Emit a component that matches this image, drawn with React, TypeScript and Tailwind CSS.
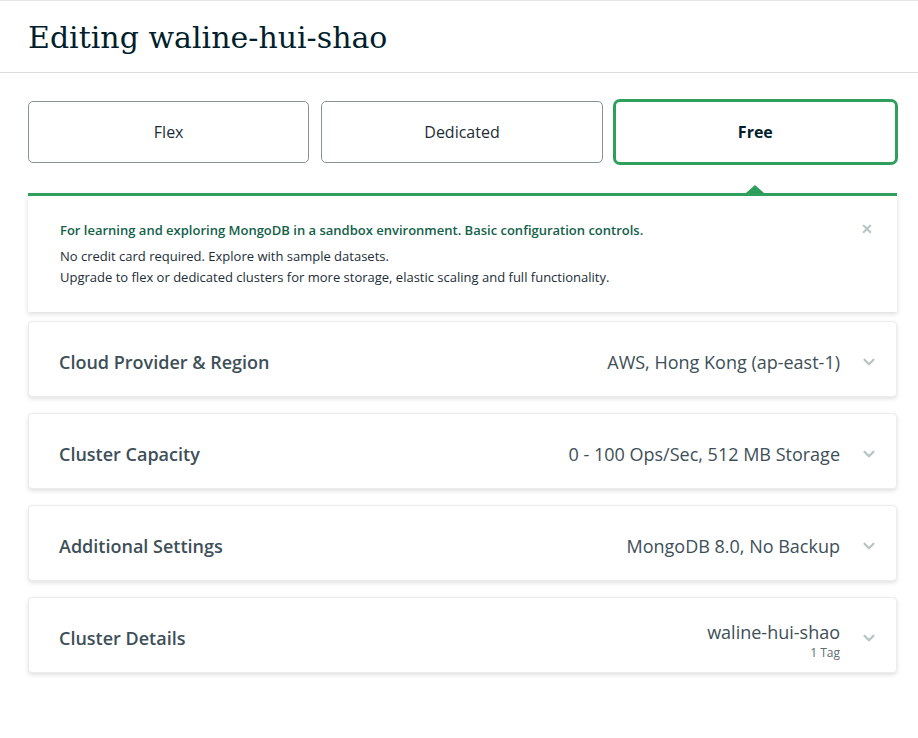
import { ChevronDown } from 'lucide-react';

const tiers = ['Flex', 'Dedicated', 'Free'];

const sections: { title: string; value: string; sub?: string }[] = [
  { title: 'Cloud Provider & Region', value: 'AWS, Hong Kong (ap-east-1)' },
  { title: 'Cluster Capacity', value: '0 - 100 Ops/Sec, 512 MB Storage' },
  { title: 'Additional Settings', value: 'MongoDB 8.0, No Backup' },
  { title: 'Cluster Details', value: 'waline-hui-shao', sub: '1 Tag' },
];

function Section({ title, value, sub }: { title: string; value: string; sub?: string }) {
  return (
    <div className="flex h-[76px] items-center justify-between rounded border border-[#ececec] bg-white pl-[30px] pr-[18px] pt-[6px] shadow-[0_2px_4px_rgba(0,0,0,0.12)]">
      <div className="text-[18px] font-semibold leading-[24px] text-[#3d4f58]">{title}</div>
      <div className="flex items-center gap-[20px]">
        <div className={`flex flex-col items-end ${sub ? 'pt-[4px]' : ''}`}>
          <div className="text-[18px] leading-[24px] text-[#3d4f58]">{value}</div>
          {sub && <div className="mt-[2px] text-[12px] leading-[14px] text-[#5c6c75]">{sub}</div>}
        </div>
        <ChevronDown size={18} strokeWidth={3} className="text-[#b8c4c2]" />
      </div>
    </div>
  );
}

export default function App() {
  return (
    <div className="min-h-screen border-t border-[#e8e8e8] bg-white font-['Open_Sans',sans-serif] text-[#001e2b]">
      <header className="flex h-[72px] items-center border-b border-[#dcdcdc] px-[28px]">
        <h1 className="mt-[2px] font-['DejaVu_Serif',serif] text-[30px] leading-[36px] text-[#001e2b]">Editing waline-hui-shao</h1>
      </header>

      <main className="pl-[28px] pr-[21px] pt-[28px]">
        <div className="grid grid-cols-3 gap-[12px] pr-[1px]">
          {tiers.map((t) =>
            t === 'Free' ? (
              <div
                key={t}
                className="-m-[2px] flex h-[66px] items-center justify-center rounded-[7px] border-[3px] border-[#2e9f5c] text-[16px] font-bold text-[#001e2b]"
              >
                {t}
              </div>
            ) : (
              <div
                key={t}
                className="flex h-[62px] items-center justify-center rounded-[5px] border border-[#889397] text-[16px] text-[#1c2d38]"
              >
                {t}
              </div>
            )
          )}
        </div>

        <div className="mt-[22px] grid grid-cols-3 gap-[12px] pr-[1px]">
          <div />
          <div />
          <div className="flex justify-center">
            <div className="h-0 w-0 border-x-[9px] border-b-[8px] border-x-transparent border-b-[#2e9f5c]" />
          </div>
        </div>

        <div className="relative border-t-[3px] border-[#2e9f5c] bg-white px-[32px] pb-[24px] pt-[25px] shadow-[0_2px_5px_rgba(0,0,0,0.14)]">
          <div className="text-[13px] font-semibold leading-[18px] text-[#136149]">
            For learning and exploring MongoDB in a sandbox environment. Basic configuration controls.
          </div>
          <div className="mt-[7px] text-[13px] leading-[21px] text-[#1c2d38]">
            <div>No credit card required. Explore with sample datasets.</div>
            <div>Upgrade to flex or dedicated clusters for more storage, elastic scaling and full functionality.</div>
          </div>
          <button className="absolute right-[24px] top-[26px] text-[14px] font-bold leading-none text-[#b8c4c2]">✕</button>
        </div>

        <div className="mt-[9px] flex flex-col gap-[16px]">
          {sections.map((s) => (
            <Section key={s.title} {...s} />
          ))}
        </div>
      </main>
    </div>
  );
}
